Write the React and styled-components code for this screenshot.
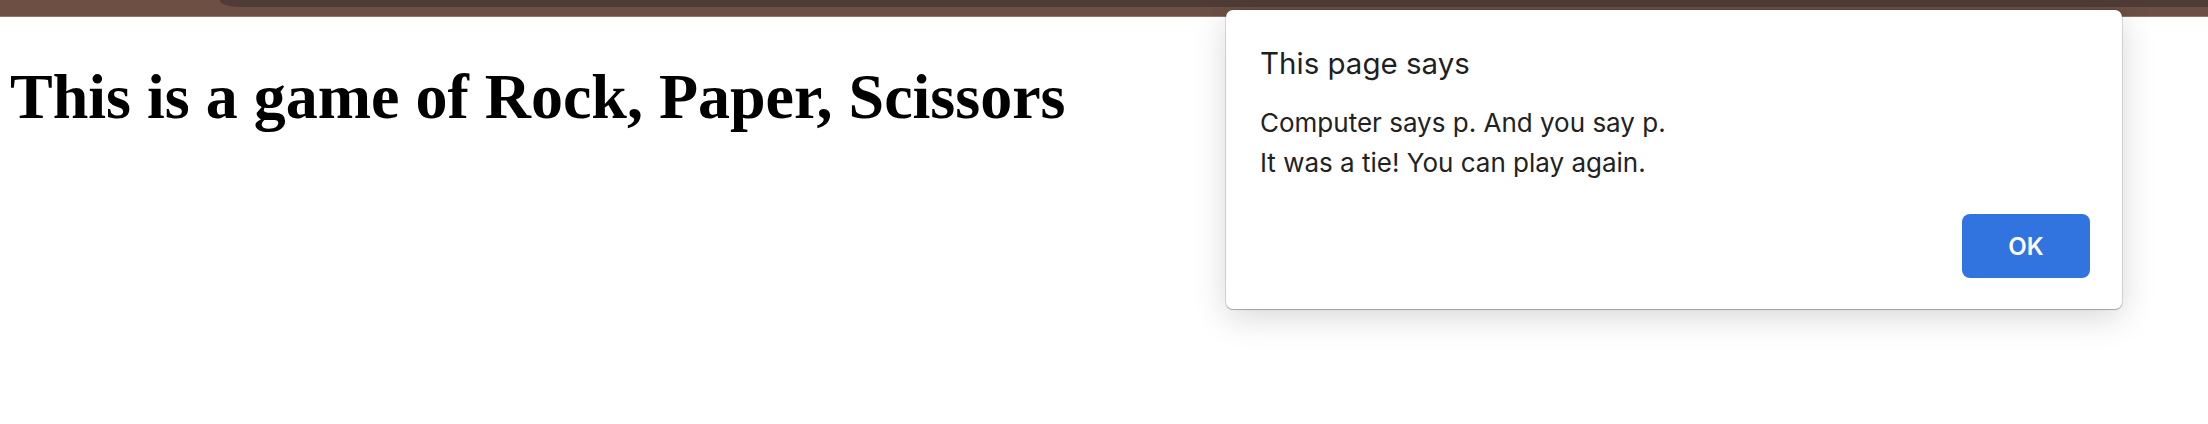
import React from "react";
import styled, { createGlobalStyle } from "styled-components";

const GlobalStyle = createGlobalStyle`
  html, body {
    margin: 0;
    padding: 0;
    background: #ffffff;
  }
  body {
    font-family: "Liberation Serif", "Times New Roman", serif;
  }
`;

const Screen = styled.div`
  position: relative;
  width: 2208px;
  height: 424px;
  overflow: hidden;
  background: #ffffff;
`;

const ChromeBar = styled.div`
  height: 16px;
  background: #6d4f43;
  border-bottom: 1px solid #8d7570;
  display: flex;
  align-items: flex-start;
  padding-left: 220px;
`;

const TabStrip = styled.div`
  flex: 1;
  height: 7px;
  background: #4f3c37;
  border-bottom-left-radius: 22px 8px;
`;

const Page = styled.main`
  padding: 43px 10px;
`;

const Heading = styled.h1`
  margin: 0;
  font-family: "Liberation Serif", "Times New Roman", serif;
  font-size: 64px;
  font-weight: 700;
  line-height: normal;
  color: #000000;
`;

const Dialog = styled.div`
  position: absolute;
  top: 10px;
  left: 1226px;
  width: 896px;
  height: 299px;
  box-sizing: border-box;
  padding: 35px 32px 31px 34px;
  background: #ffffff;
  border-radius: 7px;
  box-shadow: 0 0 0 1px rgba(0, 0, 0, 0.1), 0 1px 1px rgba(0, 0, 0, 0.22),
    0 8px 34px rgba(0, 0, 0, 0.16);
  display: flex;
  flex-direction: column;
  font-family: Inter, "Noto Sans", sans-serif;
`;

const Title = styled.div`
  font-size: 29.5px;
  line-height: 36px;
  color: #1f1f1f;
`;

const Message = styled.div`
  margin-top: 22px;
  font-size: 26px;
  line-height: 40px;
  color: #222222;
`;

const Actions = styled.div`
  margin-top: auto;
  display: flex;
  justify-content: flex-end;
`;

const OkButton = styled.button`
  width: 128px;
  height: 64px;
  border: none;
  border-radius: 8px;
  background: #3174df;
  color: #ffffff;
  font-family: Inter, "Noto Sans", sans-serif;
  font-size: 24px;
  font-weight: 600;
  cursor: pointer;
`;

export default function App() {
  return (
    <Screen>
      <GlobalStyle />
      <ChromeBar>
        <TabStrip />
      </ChromeBar>
      <Page>
        <Heading>This is a game of Rock, Paper, Scissors</Heading>
      </Page>
      <Dialog role="alertdialog">
        <Title>This page says</Title>
        <Message>
          Computer says p. And you say p.
          <br />
          It was a tie! You can play again.
        </Message>
        <Actions>
          <OkButton>OK</OkButton>
        </Actions>
      </Dialog>
    </Screen>
  );
}
